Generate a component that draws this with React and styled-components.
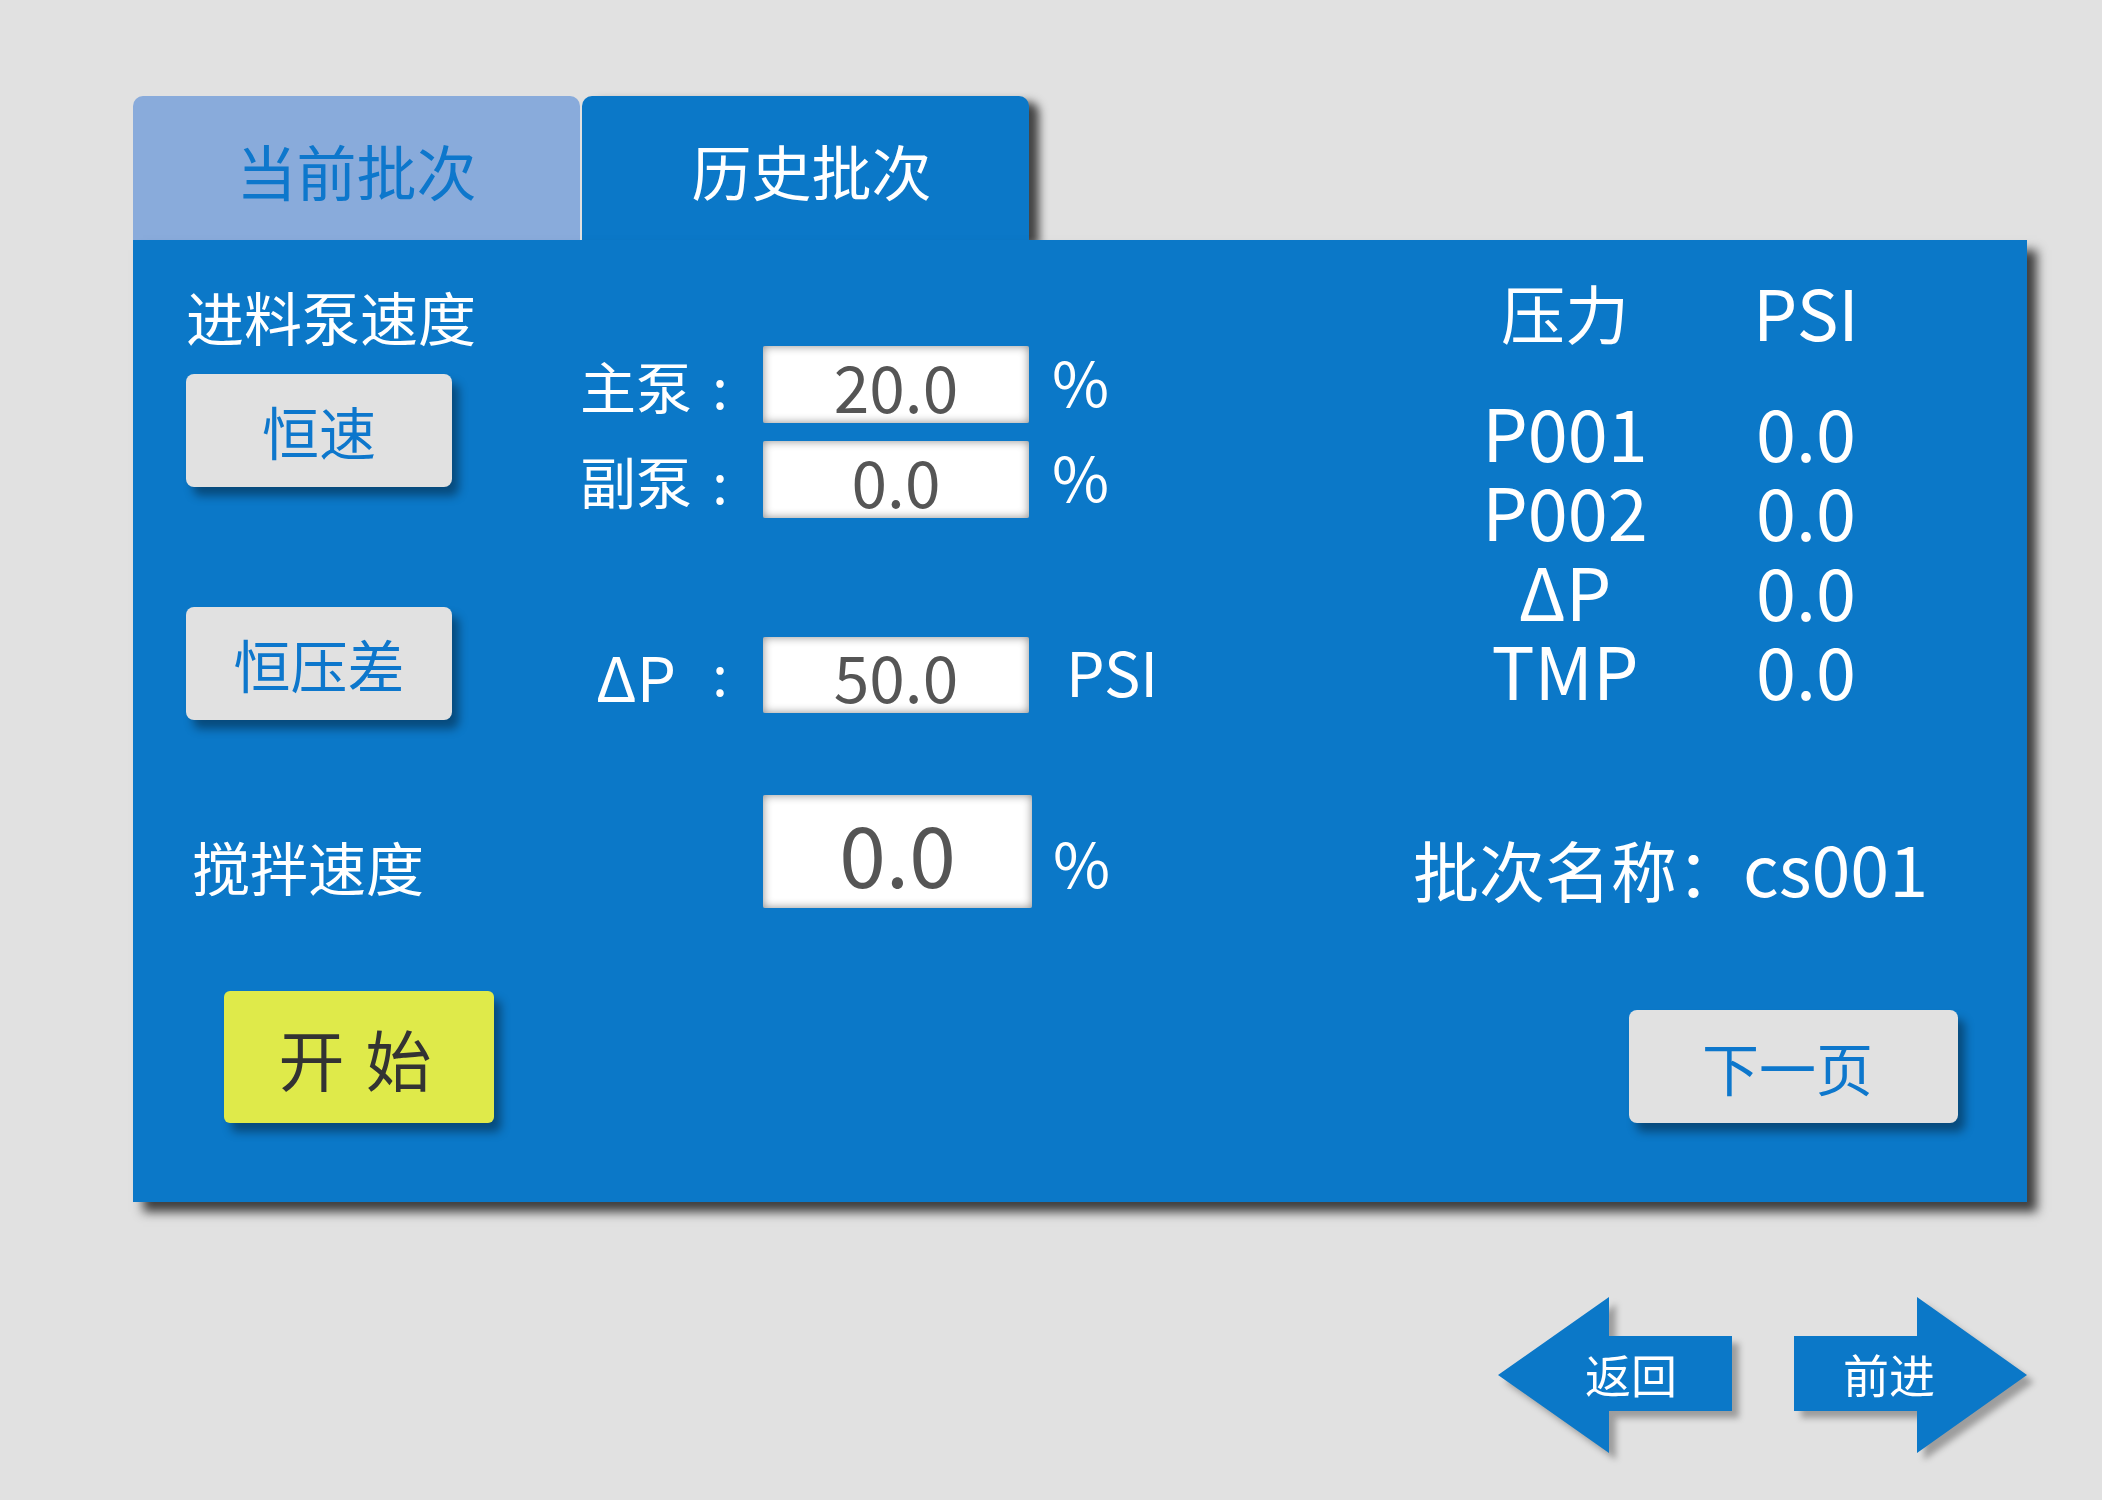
import React from 'react';
import styled, { createGlobalStyle } from 'styled-components';

const GlobalStyle = createGlobalStyle`
  html, body { margin: 0; padding: 0; background: #e1e1e1; }
  body { font-family: "Noto Sans CJK SC", "Noto Sans", sans-serif; }
  * { box-sizing: border-box; }
`;

const BLUE = '#0b78c8';
const TEXT_BLUE = '#0d77cc';

const Page = styled.div`
  width: 2102px;
  min-height: 1500px;
  padding: 96px 0 0 133px;
`;

const Frame = styled.div`
  width: 1894px;
  display: flex;
  flex-direction: column;
`;

const TabBar = styled.div`
  display: flex;
  gap: 2px;
  height: 144px;
`;

const Tab = styled.div`
  width: 447px;
  height: 144px;
  border-radius: 10px 10px 0 0;
  background: ${p => (p.$active ? BLUE : '#89abdb')};
  color: ${p => (p.$active ? '#ffffff' : TEXT_BLUE)};
  font-size: 60px;
  line-height: 1;
  display: flex;
  align-items: center;
  justify-content: center;
  padding: 4px 0 0 ${p => (p.$active ? 12 : 0)}px;
  box-shadow: ${p => (p.$active ? '10px 6px 10px rgba(0,0,0,0.7)' : 'none')};
`;

const Panel = styled.div`
  position: relative;
  width: 1894px;
  height: 962px;
  background: ${BLUE};
  box-shadow: 10px 10px 10px rgba(0, 0, 0, 0.72);
  display: flex;
  padding: 0 69px 0 53px;
  color: #ffffff;
`;

const LeftArea = styled.div`
  width: 1227px;
  padding-top: 47px;
  display: flex;
  flex-direction: column;
`;

const RightArea = styled.div`
  width: 545px;
  padding-top: 43px;
  display: flex;
  flex-direction: column;
`;

const Block = styled.div`
  display: flex;
  align-items: ${p => p.$align || 'flex-start'};
  margin-top: ${p => p.$mt || 0}px;
`;

const ModeCol = styled.div`
  width: 394px;
  display: flex;
  flex-direction: column;
`;

const SectionTitle = styled.div`
  font-size: 58px;
  line-height: 58px;
  height: 58px;
  white-space: nowrap;
`;

const ModeButton = styled.div`
  width: 266px;
  height: 113px;
  margin-top: ${p => p.$mt || 0}px;
  background: #e1e1e1;
  border-radius: 8px;
  color: ${TEXT_BLUE};
  font-size: 57px;
  line-height: 1;
  display: flex;
  align-items: center;
  justify-content: center;
  box-shadow: 7px 9px 10px rgba(0, 0, 0, 0.38);
`;

const FieldStack = styled.div`
  display: flex;
  flex-direction: column;
  gap: 18px;
  padding-top: ${p => p.$pt || 0}px;
`;

const FieldRow = styled.div`
  display: flex;
  align-items: center;
  height: ${p => p.$h}px;
`;

const FieldLabel = styled.div`
  width: 168px;
  margin-right: 15px;
  display: grid;
  grid-template-columns: 112px 56px;
  font-size: ${p => p.$size || 56}px;
  line-height: 1;
  white-space: nowrap;
`;

const FieldName = styled.span`
  text-align: center;
`;

const FieldColon = styled.span`
  text-align: center;
  font-size: 56px;
`;

const ValueBox = styled.div`
  width: ${p => p.$w}px;
  height: ${p => p.$h}px;
  background: #ffffff;
  border-radius: 2px;
  box-shadow: inset 0 0 10px rgba(0, 0, 0, 0.45);
  color: #555555;
  font-size: ${p => p.$size}px;
  line-height: 1;
  display: flex;
  align-items: center;
  justify-content: center;
`;

const Unit = styled.span`
  margin-left: ${p => p.$ml}px;
  margin-top: ${p => p.$mt || 0}px;
  font-size: ${p => p.$size || 62}px;
  line-height: 1;
  padding-bottom: 10px;
`;

const StirLabel = styled.div`
  width: 577px;
  padding-left: 6px;
  margin-top: 28px;
  font-size: 58px;
  line-height: 1;
`;

const StartButton = styled.div`
  width: 270px;
  height: 132px;
  margin: 83px 0 0 38px;
  background: #dfea4a;
  border-radius: 6px;
  color: #333333;
  font-size: 66px;
  line-height: 1;
  word-spacing: 6px;
  display: flex;
  align-items: center;
  justify-content: center;
  padding-right: 8px;
  box-shadow: 7px 9px 10px rgba(0, 0, 0, 0.38);
`;

const TableGrid = styled.div`
  margin-left: 57px;
  margin-top: ${p => p.$mt || 0}px;
  display: grid;
  grid-template-columns: 190px 190px;
  column-gap: 51px;
  grid-auto-rows: ${p => p.$row}px;
  align-items: center;
`;

const TableCell = styled.div`
  text-align: center;
  font-size: ${p => p.$size}px;
  line-height: 1;
  white-space: nowrap;
`;

const NameLine = styled.div`
  margin-top: 118px;
  height: 80px;
  font-size: 66px;
  line-height: 80px;
  white-space: nowrap;
`;

const NameValue = styled.span`
  font-size: 70px;
`;

const NextButton = styled.div`
  align-self: flex-end;
  margin-top: 103px;
  width: 329px;
  height: 113px;
  background: #e1e1e1;
  border-radius: 8px;
  color: ${TEXT_BLUE};
  font-size: 57px;
  line-height: 1;
  display: flex;
  align-items: center;
  justify-content: center;
  padding-right: 12px;
  box-shadow: 7px 9px 10px rgba(0, 0, 0, 0.38);
`;

const ArrowRow = styled.div`
  margin-top: 95px;
  display: flex;
  justify-content: flex-end;
  gap: 62px;
`;

const ArrowShadow = styled.div`
  filter: drop-shadow(7px 7px 3px rgba(0, 0, 0, 0.3));
`;

const ArrowShape = styled.div`
  width: ${p => p.$w}px;
  height: 156px;
  background: ${BLUE};
  clip-path: ${p => p.$clip};
  color: #ffffff;
  font-size: 46px;
  line-height: 1;
  display: flex;
  align-items: center;
  padding-left: ${p => p.$pl}px;
  padding-bottom: 4px;
`;

const LEFT_CLIP = 'polygon(0 78px, 111px 0, 111px 39px, 234px 39px, 234px 114px, 111px 114px, 111px 156px)';
const RIGHT_CLIP = 'polygon(0 39px, 123px 39px, 123px 0, 233px 78px, 123px 156px, 123px 114px, 0 114px)';

const pressures = [
  ['P001', '0.0'],
  ['P002', '0.0'],
  ['ΔP', '0.0'],
  ['TMP', '0.0'],
];

export default function App() {
  return (
    <>
      <GlobalStyle />
      <Page>
        <Frame>
          <TabBar>
            <Tab>当前批次</Tab>
            <Tab $active>历史批次</Tab>
          </TabBar>
          <Panel>
            <LeftArea>
              <Block>
                <ModeCol>
                  <SectionTitle>进料泵速度</SectionTitle>
                  <ModeButton $mt={29}>恒速</ModeButton>
                </ModeCol>
                <FieldStack $pt={59}>
                  <FieldRow $h={77}>
                    <FieldLabel>
                      <FieldName>主泵</FieldName>
                      <FieldColon>:</FieldColon>
                    </FieldLabel>
                    <ValueBox $w={266} $h={77} $size={64}>20.0</ValueBox>
                    <Unit $ml={23}>%</Unit>
                  </FieldRow>
                  <FieldRow $h={77}>
                    <FieldLabel>
                      <FieldName>副泵</FieldName>
                      <FieldColon>:</FieldColon>
                    </FieldLabel>
                    <ValueBox $w={266} $h={77} $size={64}>0.0</ValueBox>
                    <Unit $ml={23}>%</Unit>
                  </FieldRow>
                </FieldStack>
              </Block>

              <Block $mt={89}>
                <ModeCol>
                  <ModeButton>恒压差</ModeButton>
                </ModeCol>
                <FieldStack $pt={30}>
                  <FieldRow $h={76}>
                    <FieldLabel $size={62}>
                      <FieldName>ΔP</FieldName>
                      <FieldColon>:</FieldColon>
                    </FieldLabel>
                    <ValueBox $w={266} $h={76} $size={64}>50.0</ValueBox>
                    <Unit $ml={37} $size={61}>PSI</Unit>
                  </FieldRow>
                </FieldStack>
              </Block>

              <Block $mt={75} $align="center">
                <StirLabel>搅拌速度</StirLabel>
                <ValueBox $w={269} $h={113} $size={84}>0.0</ValueBox>
                <Unit $ml={21} $mt={28}>%</Unit>
              </Block>

              <StartButton>开 始</StartButton>
            </LeftArea>

            <RightArea>
              <TableGrid $row={56}>
                <TableCell $size={64}>压力</TableCell>
                <TableCell $size={70}>PSI</TableCell>
              </TableGrid>
              <TableGrid $row={79.5} $mt={52}>
                {pressures.map(([name, value]) => (
                  <React.Fragment key={name}>
                    <TableCell $size={72}>{name}</TableCell>
                    <TableCell $size={72}>{value}</TableCell>
                  </React.Fragment>
                ))}
              </TableGrid>
              <NameLine>
                批次名称：<NameValue>cs001</NameValue>
              </NameLine>
              <NextButton>下一页</NextButton>
            </RightArea>
          </Panel>

          <ArrowRow>
            <ArrowShadow>
              <ArrowShape $w={234} $clip={LEFT_CLIP} $pl={87}>返回</ArrowShape>
            </ArrowShadow>
            <ArrowShadow>
              <ArrowShape $w={233} $clip={RIGHT_CLIP} $pl={49}>前进</ArrowShape>
            </ArrowShadow>
          </ArrowRow>
        </Frame>
      </Page>
    </>
  );
}
